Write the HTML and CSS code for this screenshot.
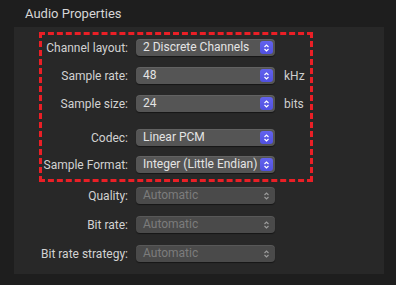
FILE: index.html
```html
<!DOCTYPE html>
<html lang="en">
<head>
    <meta charset="UTF-8">
    <title>Audio Properties</title>
    <link rel="stylesheet" href="styles.css">
</head>
<body>
    <div class="title">Audio Properties</div>
    <div class="panel">
        <div class="group">
            <div class="row">
                <span class="label">Channel layout:</span>
                <div class="popup">2 Discrete Channels<span class="stepper"><svg width="7" height="10" viewBox="0 0 7 10"><path d="M1.5 4 L3.5 2 L5.5 4 M1.5 6 L3.5 8 L5.5 6" /></svg></span></div>
            </div>
            <div class="row">
                <span class="label">Sample rate:</span>
                <div class="popup">48<span class="stepper"><svg width="7" height="10" viewBox="0 0 7 10"><path d="M1.5 4 L3.5 2 L5.5 4 M1.5 6 L3.5 8 L5.5 6" /></svg></span></div>
                <span class="unit">kHz</span>
            </div>
            <div class="row">
                <span class="label">Sample size:</span>
                <div class="popup">24<span class="stepper"><svg width="7" height="10" viewBox="0 0 7 10"><path d="M1.5 4 L3.5 2 L5.5 4 M1.5 6 L3.5 8 L5.5 6" /></svg></span></div>
                <span class="unit">bits</span>
            </div>
            <div class="row row-spaced">
                <span class="label">Codec:</span>
                <div class="popup">Linear PCM<span class="stepper"><svg width="7" height="10" viewBox="0 0 7 10"><path d="M1.5 4 L3.5 2 L5.5 4 M1.5 6 L3.5 8 L5.5 6" /></svg></span></div>
            </div>
            <div class="row">
                <span class="label">Sample Format:</span>
                <div class="popup">Integer (Little Endian)<span class="stepper"><svg width="7" height="10" viewBox="0 0 7 10"><path d="M1.5 4 L3.5 2 L5.5 4 M1.5 6 L3.5 8 L5.5 6" /></svg></span></div>
            </div>
        </div>
        <div class="rest">
            <div class="row">
                <span class="label">Quality:</span>
                <div class="popup disabled">Automatic<span class="stepper"><svg width="7" height="10" viewBox="0 0 7 10"><path d="M1.5 4 L3.5 2 L5.5 4 M1.5 6 L3.5 8 L5.5 6" /></svg></span></div>
            </div>
            <div class="row">
                <span class="label">Bit rate:</span>
                <div class="popup disabled">Automatic<span class="stepper"><svg width="7" height="10" viewBox="0 0 7 10"><path d="M1.5 4 L3.5 2 L5.5 4 M1.5 6 L3.5 8 L5.5 6" /></svg></span></div>
            </div>
            <div class="row">
                <span class="label">Bit rate strategy:</span>
                <div class="popup disabled">Automatic<span class="stepper"><svg width="7" height="10" viewBox="0 0 7 10"><path d="M1.5 4 L3.5 2 L5.5 4 M1.5 6 L3.5 8 L5.5 6" /></svg></span></div>
            </div>
        </div>
    </div>
</body>
</html>
```

FILE: styles.css
```css
/* Page */
body {
    margin: 0;
    width: 396px;
    height: 285px;
    background-color: #1e1e1e;
    font-family: Roboto, "Liberation Sans", sans-serif;
    font-size: 12px;
    color: #d2d2d2;
    overflow: hidden;
}

/* Section title */
.title {
    height: 27px;
    line-height: 28px;
    padding-left: 25px;
    font-size: 13px;
    color: #d6d6d6;
}

/* Panel box */
.panel {
    margin-left: 14px;
    width: 370px;
    height: 247px;
    background-color: #282828;
    padding-top: 5px;
    box-sizing: border-box;
}

/* Red dashed highlight */
.group {
    margin-left: 25px;
    width: 274px;
    height: 150px;
    box-sizing: border-box;
    border: 3px dashed #ea1f26;
    padding-top: 4px;
    display: flex;
    flex-direction: column;
    gap: 11px;
}

.group .row-spaced {
    margin-top: 6px;
}

.group .row:last-child {
    margin-top: -1px;
}

.rest {
    padding-left: 28px;
    padding-top: 5px;
    display: flex;
    flex-direction: column;
    gap: 12px;
}

/* Rows */
.row {
    display: flex;
    align-items: center;
    height: 17px;
}

.label {
    width: 86px;
    flex: none;
    margin-right: 8px;
    display: flex;
    justify-content: flex-end;
    white-space: nowrap;
}

.unit {
    margin-left: 9px;
    color: #cfcfcf;
}

/* Popup buttons */
.popup {
    position: relative;
    width: 139px;
    height: 17px;
    flex: none;
    box-sizing: border-box;
    padding-left: 7px;
    line-height: 17px;
    background-color: #555555;
    border-radius: 4px;
    box-shadow: 0 1px 1px rgba(0, 0, 0, 0.45), inset 0 1px 0 rgba(255, 255, 255, 0.08);
    color: #e4e4e4;
    white-space: nowrap;
}

.stepper {
    position: absolute;
    right: 2px;
    top: 2px;
    width: 13px;
    height: 13px;
    border-radius: 3px;
    background: linear-gradient(#6363ee, #5050e0);
    display: flex;
    align-items: center;
    justify-content: center;
}

.stepper path {
    fill: none;
    stroke: #ffffff;
    stroke-width: 1.2;
}

.popup.disabled {
    background-color: #4a4a4a;
    color: #7c7c7c;
}

.popup.disabled .stepper {
    background: none;
}

.popup.disabled .stepper path {
    stroke: #9a9a9a;
}
```
